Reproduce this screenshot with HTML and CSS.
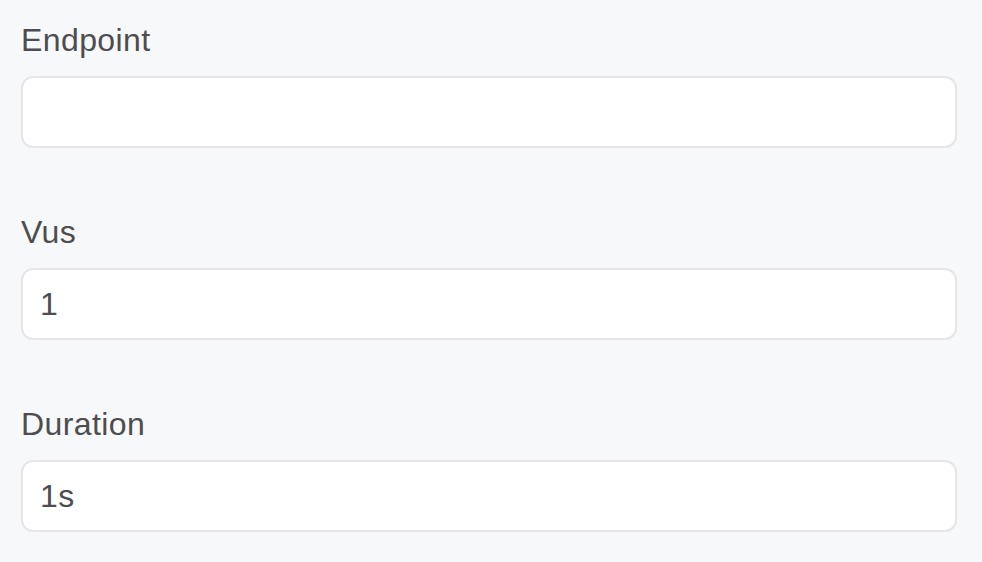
FILE: index.html
```html
<!DOCTYPE html>
<html lang="en">
<head>
  <meta charset="UTF-8" />
  <meta name="viewport" content="width=device-width, initial-scale=1" />
  <title>Load Test</title>
  <link rel="stylesheet" href="styles.css">
</head>
<body>

  <form class="form">
    <div class="field">
      <label for="endpoint">Endpoint</label>
      <input type="text" id="endpoint" />
    </div>

    <div class="field">
      <label for="vus">Vus</label>
      <input type="text" id="vus" value="1" />
    </div>

    <div class="field">
      <label for="duration">Duration</label>
      <input type="text" id="duration" value="1s" />
    </div>
  </form>

</body>
</html>
```

FILE: styles.css
```css
body {
  margin: 0;
  font-family: 'Liberation Sans', Arial, sans-serif;
  background: #f7f8fa;
  color: #4d4d50;
  padding: 16px 25px 0 21px;
}

.form {
  display: flex;
  flex-direction: column;
  gap: 60px;
}

.field {
  display: flex;
  flex-direction: column;
  gap: 12px;
}

label {
  display: block;
  font-size: 32px;
  line-height: 48px;
  letter-spacing: 0.4px;
}

input {
  box-sizing: border-box;
  width: 100%;
  height: 72px;
  padding: 0 17px;
  font-family: inherit;
  font-size: 32px;
  letter-spacing: 0.4px;
  color: #4d4d50;
  background: #fff;
  border: 2px solid #e6e6ea;
  border-radius: 12px;
  outline: none;
}
```
